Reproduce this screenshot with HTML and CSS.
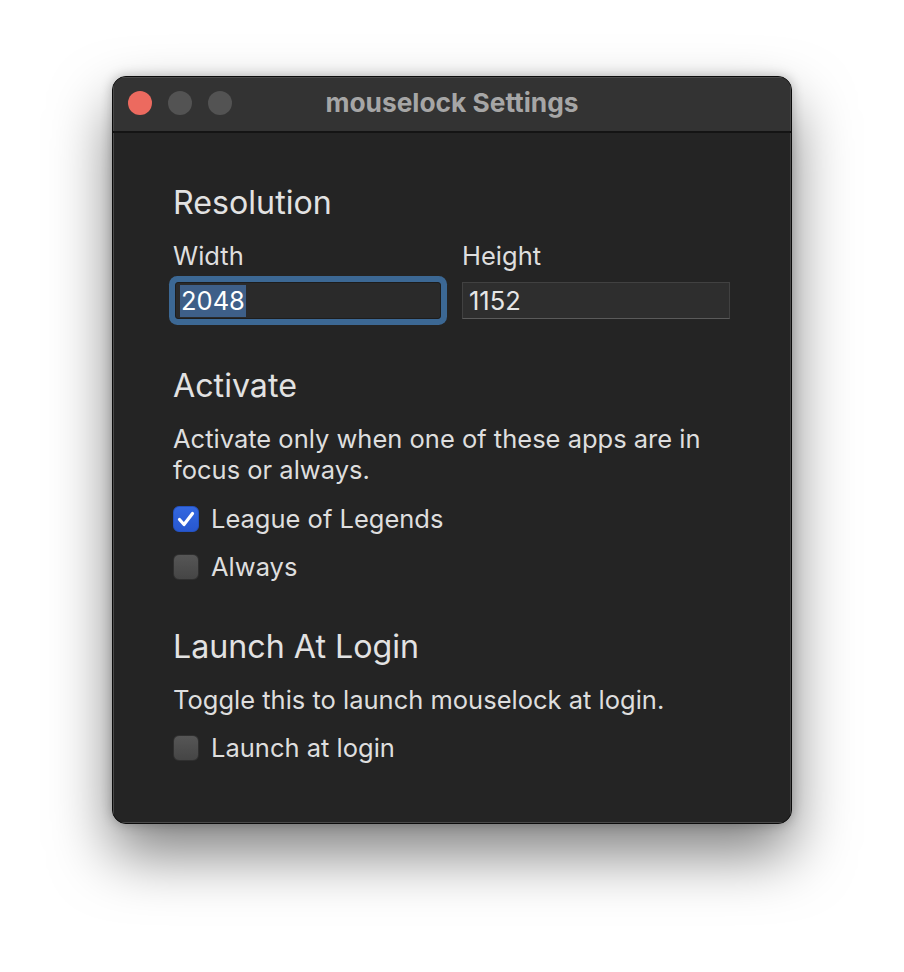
FILE: index.html
```html
<!DOCTYPE html>
<html>
<head>
<meta charset="utf-8">
<link rel="stylesheet" href="styles.css">
</head>
<body>
<div class="window">
  <div class="titlebar">
    <div class="lights">
      <span class="light red"></span>
      <span class="light gray"></span>
      <span class="light gray"></span>
    </div>
    <div class="title">mouselock Settings</div>
  </div>
  <div class="content">
    <h2 class="heading">Resolution</h2>
    <div class="fields">
      <div class="field">
        <div class="label">Width</div>
        <div class="input focused"><span class="sel">2048</span></div>
      </div>
      <div class="field">
        <div class="label">Height</div>
        <div class="input">1152</div>
      </div>
    </div>

    <h2 class="heading h-activate">Activate</h2>
    <p class="desc">Activate only when one of these apps are in focus or always.</p>
    <div class="check first">
      <span class="box checked">
        <svg viewBox="0 0 26 26" width="26" height="26"><path d="M6.5 13.5 L11 18.5 L19.5 7.5" fill="none" stroke="#fff" stroke-width="3.2" stroke-linecap="round" stroke-linejoin="round"/></svg>
      </span>
      <span class="check-label">League of Legends</span>
    </div>
    <div class="check">
      <span class="box"></span>
      <span class="check-label">Always</span>
    </div>

    <h2 class="heading h-launch">Launch At Login</h2>
    <p class="desc">Toggle this to launch mouselock at login.</p>
    <div class="check">
      <span class="box"></span>
      <span class="check-label">Launch at login</span>
    </div>
  </div>
</div>
</body>
</html>
```
FILE: styles.css
```css
html, body {
  margin: 0;
  padding: 0;
  background: #ffffff;
}
body {
  padding: 76px 112px 148px;
  font-family: Inter, "Noto Sans", "Liberation Sans", sans-serif;
}
.window {
  width: 680px;
  height: 748px;
  box-sizing: border-box;
  background: #242424;
  border: 1px solid #0b0b0b;
  border-radius: 14px;
  box-shadow: 0 30px 60px rgba(0,0,0,0.5), 0 0 12px rgba(0,0,0,0.25);
  overflow: hidden;
  display: flex;
  flex-direction: column;
}
.titlebar {
  height: 56px;
  flex: none;
  background: #333333;
  border-bottom: 2px solid #141414;
  box-sizing: border-box;
  position: relative;
  display: flex;
  align-items: center;
  justify-content: center;
  box-shadow: inset 0 1px 0 #4a4a4a, inset 1px 0 0 #4a4a4a, inset -1px 0 0 #4a4a4a;
}
.lights {
  position: absolute;
  left: 15px;
  top: 14px;
  display: flex;
  gap: 16px;
}
.light {
  width: 24px;
  height: 24px;
  border-radius: 50%;
  display: block;
}
.light.red { background: #ec6a5f; }
.light.gray { background: #535353; }
.title {
  color: #a6a6a6;
  font-weight: 700;
  font-size: 26.3px;
  margin-top: -4px;
}
.content {
  padding: 50px 61px 0 60px;
  color: #dedede;
  font-size: 25.5px;
  line-height: 31px;
  box-shadow: inset 1px 0 0 #4a4a4a, inset -1px 0 0 #4a4a4a, inset 0 -1px 0 #4a4a4a;
  flex: 1;
}
.heading {
  margin: 0;
  font-weight: 400;
  font-size: 32.2px;
  line-height: 40px;
  color: #e2e2e2;
}
.fields {
  display: grid;
  grid-template-columns: 272px 268px;
  column-gap: 17px;
  margin-top: 17px;
}
.label {
  line-height: 31px;
}
.input {
  margin-top: 11px;
  height: 37px;
  box-sizing: border-box;
  background: #2e2e2e;
  border: 1px solid #414141;
  border-bottom-color: #5a5a5a;
  padding: 0 6px;
  display: flex;
  align-items: center;
  color: #e6e6e6;
}
.input.focused {
  margin-left: 2px;
  width: 266px;
  box-shadow: 0 0 0 6px #3c6894;
  border-radius: 3px;
  border-color: #1d1d1d;
  background: #2a2a2a;
  padding-left: 4px;
}
.sel {
  background: #3e5f88;
  color: #ffffff;
  line-height: 32px;
  padding: 0 1px;
}
.h-activate { margin-top: 47px; }
.h-launch { margin-top: 45px; }
.desc {
  margin: 17px 0 0;
  max-width: 545px;
}
.check {
  display: flex;
  align-items: center;
  gap: 12px;
  margin-top: 17px;
  height: 31px;
}
.check.first { margin-top: 18px; }
.box {
  width: 26px;
  height: 26px;
  border-radius: 6px;
  box-sizing: border-box;
  background: linear-gradient(#565656, #454545);
  border: 1px solid #2f2f2f;
  display: block;
  flex: none;
}
.box.checked {
  background: linear-gradient(#3468e0, #2757cf);
  border-color: #2452c0;
}
.box svg { display: block; margin: -1px; }
```
